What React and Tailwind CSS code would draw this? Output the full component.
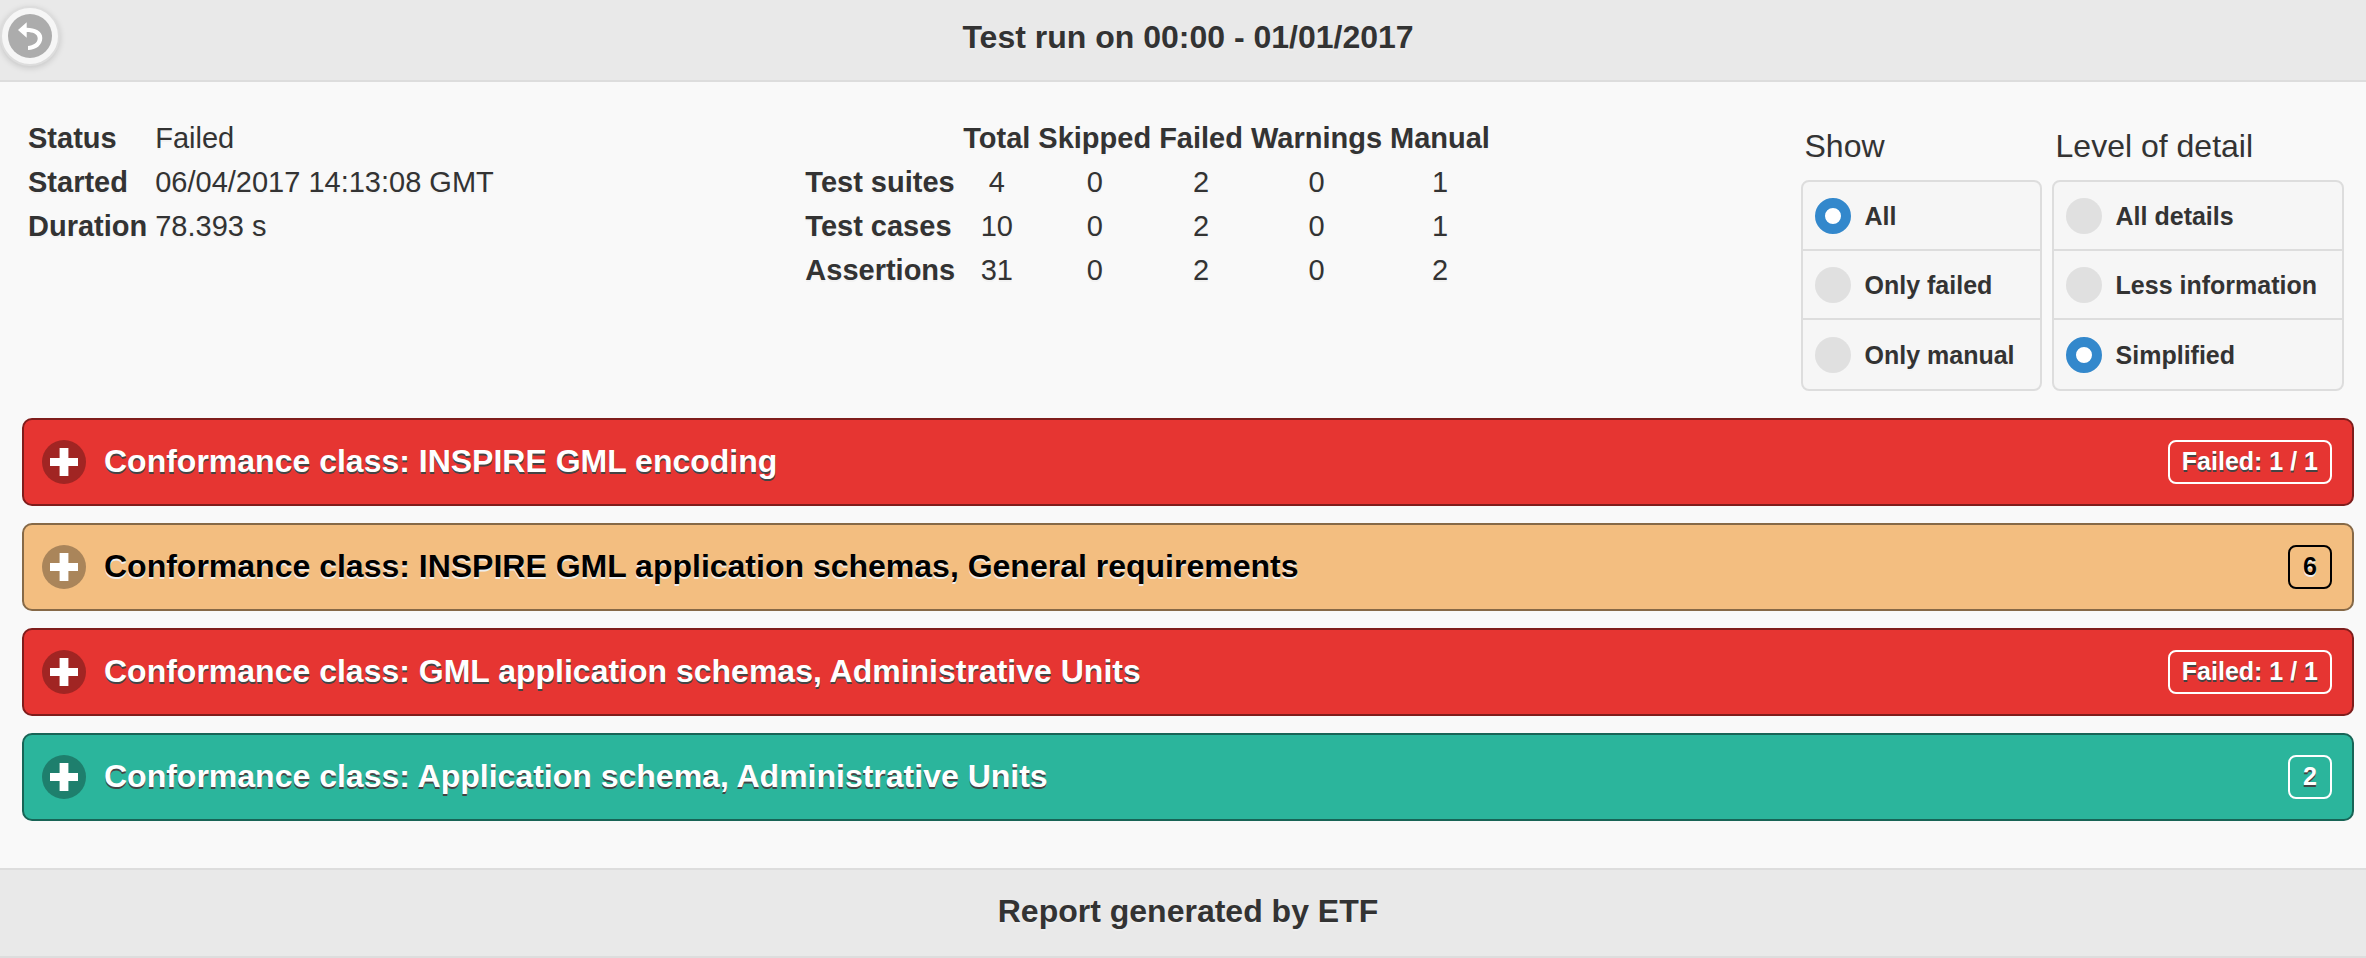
import React from 'react';

const TONES = {
  failed: {
    bar: 'bg-[#e63532] border-[#7f1d1c] text-white [text-shadow:0_2px_0_#444]',
    icon: 'bg-[#a12523]',
    badge: 'border-white',
  },
  manual: {
    bar: 'bg-[#f3be80] border-[#866947] text-black [text-shadow:0_2px_0_#eee]',
    icon: 'bg-[#aa855a]',
    badge: 'border-black',
  },
  passed: {
    bar: 'bg-[#2bb59c] border-[#186456] text-white [text-shadow:0_2px_0_#444]',
    icon: 'bg-[#1e7f6d]',
    badge: 'border-white',
  },
};

const CLASSES = [
  { title: 'Conformance class: INSPIRE GML encoding', badge: 'Failed: 1 / 1', tone: 'failed' },
  { title: 'Conformance class: INSPIRE GML application schemas, General requirements', badge: '6', tone: 'manual' },
  { title: 'Conformance class: GML application schemas, Administrative Units', badge: 'Failed: 1 / 1', tone: 'failed' },
  { title: 'Conformance class: Application schema, Administrative Units', badge: '2', tone: 'passed' },
];

const INFO = [
  ['Status', 'Failed'],
  ['Started', '06/04/2017 14:13:08 GMT'],
  ['Duration', '78.393 s'],
];

const COLUMNS = ['Total', 'Skipped', 'Failed', 'Warnings', 'Manual'];
const COUNTS = [
  ['Test suites', [4, 0, 2, 0, 1]],
  ['Test cases', [10, 0, 2, 0, 1]],
  ['Assertions', [31, 0, 2, 0, 2]],
];

function RadioGroup({ legend, name, options, selected }) {
  return (
    <fieldset className="min-w-0">
      <legend className="px-1 text-[32px] leading-10">{legend}</legend>
      <div className="mt-3.5 divide-y-2 divide-[#ddd] overflow-hidden rounded-lg border-2 border-[#ddd] bg-[#f6f6f6]">
        {options.map((option) => (
          <label key={option} className="flex h-[69px] items-center gap-3.5 pr-[25px] pl-3 text-[25px] leading-8 font-bold whitespace-nowrap">
            <input
              type="radio"
              name={name}
              defaultChecked={option === selected}
              className="size-9 shrink-0 appearance-none rounded-full bg-[#e0e0e0] checked:border-10 checked:border-[#3388cc] checked:bg-white"
            />
            {option}
          </label>
        ))}
      </div>
    </fieldset>
  );
}

function ConformanceClass({ title, badge, tone }) {
  const style = TONES[tone];
  return (
    <h2>
      <button
        type="button"
        aria-expanded="false"
        className={`flex h-22 w-full items-center rounded-[10px] border-2 pr-5 pl-[18px] text-left font-bold ${style.bar}`}
      >
        <span className={`flex size-11 shrink-0 items-center justify-center rounded-full ${style.icon}`}>
          <svg viewBox="0 0 28 28" className="size-7" fill="#fff" aria-hidden="true">
            <path d="M9.6 0h8.8v10h9.6v8h-9.6v10H9.6V18H0v-8h9.6z" />
          </svg>
        </span>
        <span className="ml-[18px] flex-1 pb-[3px] text-[32px] leading-10">{title}</span>
        <span className={`flex h-11 min-w-11 items-center justify-center rounded-lg border-2 px-3 pb-0.5 text-[25px] leading-8 ${style.badge}`}>{badge}</span>
      </button>
    </h2>
  );
}

export default function App() {
  return (
    <div className="min-h-screen bg-[#f9f9f9] font-['Liberation_Sans',Arial,sans-serif] text-[#333]">
      <header className="relative border-b-2 border-[#ddd] bg-[#e9e9e9] pt-[17px] pb-[23px] pl-2.5 text-center [text-shadow:0_2px_0_#eee]">
        <button
          type="button"
          aria-label="Back"
          className="absolute top-1.5 left-0 flex size-15 items-center justify-center rounded-full border-2 border-[#ddd] bg-[#f6f6f6] shadow-[0_2px_6px_rgba(0,0,0,0.15)]"
        >
          <svg viewBox="0 0 44 44" className="size-11" aria-hidden="true">
            <circle cx="22" cy="22" r="22" fill="#acacac" />
            <path
              fill="#fff"
              d="M10 16 18.7 8.3v5.4C27 13.7 34.3 17 34.3 24S28 36 20 36v-4c5-.5 9.7-3 9.7-7.5 0-4.5-4.7-6.5-11-6.5v5.7z"
            />
          </svg>
        </button>
        <h1 className="text-[32px] leading-10 font-bold">Test run on 00:00 - 01/01/2017</h1>
      </header>

      <main className="pt-[34px] pr-3 pb-[47px] pl-[22px]">
        <div className="grid grid-cols-3 items-start [text-shadow:0_2px_0_#f3f3f3]">
          <table className="w-max text-[29px] leading-11">
            <tbody>
              {INFO.map(([label, value]) => (
                <tr key={label}>
                  <th scope="row" className="px-1.5 py-0 text-left font-bold">{label}</th>
                  <td className="px-0.5 py-0">{value}</td>
                </tr>
              ))}
            </tbody>
          </table>

          <table className="w-max text-[29px] leading-11">
            <thead>
              <tr>
                <td />
                {COLUMNS.map((column) => (
                  <th key={column} scope="col" className="px-1 py-0 font-bold">{column}</th>
                ))}
              </tr>
            </thead>
            <tbody>
              {COUNTS.map(([label, values]) => (
                <tr key={label}>
                  <th scope="row" className="py-0 pr-1 pl-1.5 text-left font-bold">{label}</th>
                  {values.map((value, i) => (
                    <td key={COLUMNS[i]} className="px-1 py-0 text-center">{value}</td>
                  ))}
                </tr>
              ))}
            </tbody>
          </table>

          <form className="mt-2.5 mr-2.5 flex justify-end gap-2.5">
            <RadioGroup legend="Show" name="show" options={['All', 'Only failed', 'Only manual']} selected="All" />
            <RadioGroup
              legend="Level of detail"
              name="detail"
              options={['All details', 'Less information', 'Simplified']}
              selected="Simplified"
            />
          </form>
        </div>

        <div className="mt-[27px] flex flex-col gap-[17px]">
          {CLASSES.map((item) => (
            <ConformanceClass key={item.title} {...item} />
          ))}
        </div>
      </main>

      <footer className="border-y-2 border-[#ddd] bg-[#e9e9e9] pt-[21px] pb-[25px] pl-2.5 text-center [text-shadow:0_2px_0_#eee]">
        <h2 className="text-[32px] leading-10 font-bold">Report generated by ETF</h2>
      </footer>
    </div>
  );
}
